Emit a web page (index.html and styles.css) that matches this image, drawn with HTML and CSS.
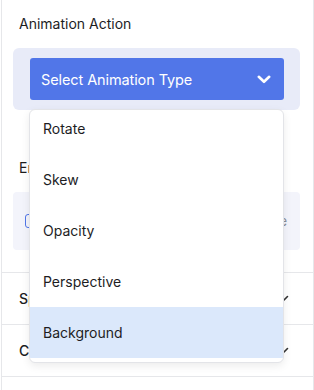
FILE: index.html
```html
<!DOCTYPE html>
<html>
<head>
<meta charset="utf-8">
<link rel="stylesheet" href="styles.css">
</head>
<body>
<div class="sidebar">
  <section class="section first">
    <div class="label">Animation Action</div>
    <div class="select-panel">
      <div class="select">
        <span class="select-text">Select Animation Type</span>
        <svg class="select-chev" width="14" height="9" viewBox="0 0 14 9"><path d="M1.8 1.8 L7 6.8 L12.2 1.8" fill="none" stroke="#fff" stroke-width="2.6" stroke-linecap="round" stroke-linejoin="round"/></svg>
        <div class="dropdown">
          <ul class="options">
            <li class="option">Rotate</li>
            <li class="option">Skew</li>
            <li class="option">Opacity</li>
            <li class="option">Perspective</li>
            <li class="option active">Background</li>
          </ul>
        </div>
      </div>
    </div>
    <div class="label second-label">Enable Trigger</div>
    <div class="trigger-panel">
      <span class="check"></span>
      <span class="trigger-text">Animate on scroll</span>
      <span class="trigger-right">Inactive</span>
    </div>
  </section>
  <section class="section row">
    <span class="row-label">Speed</span>
    <svg class="row-chev" width="12" height="8" viewBox="0 0 12 8"><path d="M1.5 1.5 L6 6 L10.5 1.5" fill="none" stroke="#333" stroke-width="1.6" stroke-linecap="round" stroke-linejoin="round"/></svg>
  </section>
  <section class="section row">
    <span class="row-label">Controls</span>
    <svg class="row-chev" width="12" height="8" viewBox="0 0 12 8"><path d="M1.5 1.5 L6 6 L10.5 1.5" fill="none" stroke="#333" stroke-width="1.6" stroke-linecap="round" stroke-linejoin="round"/></svg>
  </section>
</div>
</body>
</html>
```

FILE: styles.css
```css
* { box-sizing: border-box; }
html, body { margin: 0; padding: 0; background: #fff; }
body {
  font-family: Inter, "Noto Sans", "Liberation Sans", sans-serif;
  color: #1d1d1f;
  width: 314px;
  height: 390px;
  overflow: hidden;
}
.sidebar {
  margin-left: 1px;
  width: 313px;
  height: 390px;
  border-left: 1px solid #e6e7ea;
  border-right: 1px solid #e6e7ea;
}
.section {
  padding: 0 13px 0 11px;
}
.section.first {
  padding-top: 14px;
  padding-bottom: 22px;
  border-bottom: 1px solid #e6e7ea;
}
.label {
  font-size: 14px;
  line-height: 20px;
  padding-left: 6px;
  color: #1d1d1f;
}
.select-panel {
  margin-top: 14px;
  background: #e8ebf8;
  border-radius: 6px;
  padding: 10px 16px 10px 17px;
}
.select {
  position: relative;
  height: 42px;
  background: #5176e8;
  border-radius: 3px;
  display: flex;
  align-items: center;
  justify-content: space-between;
  padding: 0 13px 0 11px;
}
.select-text {
  color: #fff;
  font-size: 14.5px;
  letter-spacing: -0.1px;
}
.select-chev { display: block; }
.dropdown {
  position: absolute;
  left: -1px;
  right: 0;
  top: 51px;
  height: 254px;
  background: #fff;
  border: 1px solid #e3e4e8;
  border-radius: 6px;
  box-shadow: 0 3px 8px rgba(0, 0, 0, 0.08);
  overflow: hidden;
  display: flex;
  flex-direction: column;
  justify-content: flex-end;
  padding-bottom: 4px;
  z-index: 10;
}
.options {
  list-style: none;
  margin: 0;
  padding: 0;
  flex-shrink: 0;
}
.option {
  height: 51px;
  display: flex;
  align-items: center;
  padding-left: 13px;
  font-size: 14px;
  color: #1d1d1f;
}
.option.active { background: #dbe8fb; }
.second-label { margin-top: 48px; }
.trigger-panel {
  margin-top: 14px;
  height: 58px;
  background: #f3f4fb;
  border-radius: 4px;
  display: flex;
  align-items: center;
  padding: 0 13px 0 12px;
  gap: 8px;
}
.check {
  width: 14px;
  height: 14px;
  border: 1.5px solid #5176e8;
  border-radius: 3px;
}
.trigger-text { font-size: 13px; color: #5176e8; flex: 1; }
.trigger-right { font-size: 13px; color: #8a8d96; }
.row {
  height: 52px;
  display: flex;
  align-items: center;
  justify-content: space-between;
  border-bottom: 1px solid #e6e7ea;
  padding-left: 17px;
  padding-right: 24px;
}
.row-label { font-size: 14px; font-weight: 500; }
.row-chev { display: block; }
```
